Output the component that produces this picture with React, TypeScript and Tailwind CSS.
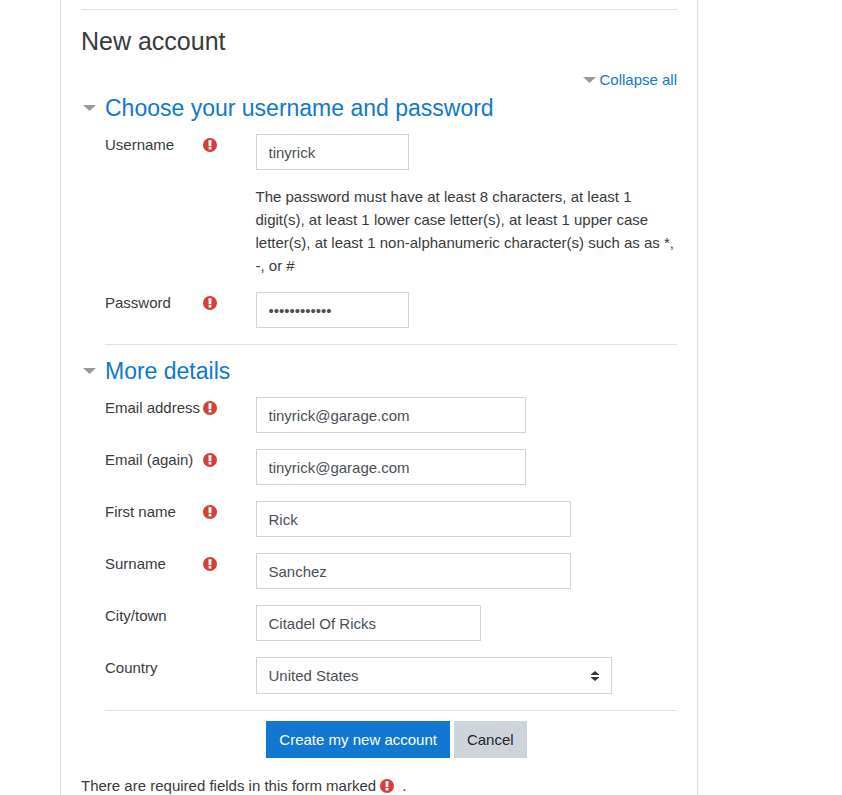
import type { ReactNode } from "react";

function RequiredIcon() {
  return (
    <svg
      viewBox="0 0 14 14"
      className="inline-block size-3.5 shrink-0"
      role="img"
      aria-label="Required"
    >
      <circle cx="7" cy="7" r="7" fill="#d43f3a" />
      <path d="M5.4 2.3h3.2l-.3 6H5.7z" fill="#fff" />
      <path d="M5.6 9h2.8v2.5H5.6z" fill="#fff" />
    </svg>
  );
}

function Caret() {
  return (
    <svg viewBox="0 0 13 6" className="h-1.5 w-[13px] shrink-0" aria-hidden="true">
      <path d="M0 0h13L6.5 6z" fill="#999" />
    </svg>
  );
}

const control =
  "block max-w-full appearance-none border border-[#ced4da] bg-white px-3 text-[15px] text-[#495057] outline-none";

type RowProps = {
  id?: string;
  label?: string;
  required?: boolean;
  children: ReactNode;
};

function Row({ id, label, required, children }: RowProps) {
  return (
    <div className="-mx-[15px] flex">
      <div className="flex w-1/4 items-start justify-between pr-6 pl-[15px] leading-[22px]">
        {label && (
          <label htmlFor={id} className="whitespace-nowrap">
            {label}
          </label>
        )}
        {required && (
          <span className="flex h-[21px] items-center">
            <RequiredIcon />
          </span>
        )}
      </div>
      <div className="w-3/4 px-[15px]">{children}</div>
    </div>
  );
}

type SectionProps = { title: string; children: ReactNode };

function Section({ title, children }: SectionProps) {
  return (
    <fieldset>
      <legend className="contents">
        <a
          href="#"
          className="flex items-center gap-[9px] pl-0.5 text-[23px] leading-7 text-[#1177d1]"
        >
          <Caret />
          {title}
        </a>
      </legend>
      <div className="mt-3 ml-6 flex flex-col gap-4 border-b border-[#dee2e6] pb-4">
        {children}
      </div>
    </fieldset>
  );
}

export default function App() {
  return (
    <main className="mr-36 ml-[60px] min-h-screen border-x border-[#dfdfdf] bg-white px-5 pt-[9px] font-['Liberation_Sans',Arial,sans-serif] text-[15px] leading-[23px] text-[#373a3c]">
      <hr className="border-[#dfdfdf]" />
      <h3 className="mt-4 text-[25px] leading-[30px]">New account</h3>
      <form onSubmit={(e) => e.preventDefault()}>
        <div className="mt-3 flex justify-end">
          <a href="#" className="flex items-center gap-[3px] text-[#1177d1]">
            <Caret />
            Collapse all
          </a>
        </div>
        <div className="mt-[3px]">
          <Section title="Choose your username and password">
            <Row id="username" label="Username" required>
              <input id="username" type="text" defaultValue="tinyrick" className={`${control} h-9 w-[153px]`} />
            </Row>
            <Row>
              <p className="-my-px">
                The password must have at least 8 characters, at least 1 digit(s), at least 1 lower
                case letter(s), at least 1 upper case letter(s), at least 1 non-alphanumeric
                character(s) such as as *, -, or #
              </p>
            </Row>
            <Row id="password" label="Password" required>
              <input id="password" type="password" defaultValue="wubbalubba12" className={`${control} h-9 w-[153px]`} />
            </Row>
          </Section>
        </div>
        <div className="mt-3">
          <Section title="More details">
            <Row id="email" label="Email address" required>
              <input id="email" type="text" defaultValue="tinyrick@garage.com" className={`${control} h-9 w-[270px]`} />
            </Row>
            <Row id="email2" label="Email (again)" required>
              <input id="email2" type="text" defaultValue="tinyrick@garage.com" className={`${control} h-9 w-[270px]`} />
            </Row>
            <Row id="firstname" label="First name" required>
              <input id="firstname" type="text" defaultValue="Rick" className={`${control} h-9 w-[315px]`} />
            </Row>
            <Row id="surname" label="Surname" required>
              <input id="surname" type="text" defaultValue="Sanchez" className={`${control} h-9 w-[315px]`} />
            </Row>
            <Row id="city" label="City/town">
              <input id="city" type="text" defaultValue="Citadel Of Ricks" className={`${control} h-9 w-[225px]`} />
            </Row>
            <Row id="country" label="Country">
              <div className="relative w-[356px] max-w-full">
                <select id="country" defaultValue="US" className={`${control} h-[37px] w-full`}>
                  <option value="US">United States</option>
                </select>
                <svg
                  viewBox="0 0 8 10"
                  className="pointer-events-none absolute top-3.5 right-[13px] h-2.5 w-2"
                  aria-hidden="true"
                >
                  <path d="M4 0l4 3.2V4H0v-.8zM4 10L0 6.8V6h8v.8z" fill="#343a40" />
                </svg>
              </div>
            </Row>
          </Section>
        </div>
        <div className="mt-2.5 flex justify-center gap-1 pl-[35px]">
          <button type="submit" className="h-[37px] bg-[#1177d1] px-[13px] text-white">
            Create my new account
          </button>
          <button type="button" className="h-[37px] bg-[#ced4da] px-[13px] text-[#212529]">
            Cancel
          </button>
        </div>
      </form>
      <p className="mt-4 flex items-center gap-1">
        There are required fields in this form marked
        <RequiredIcon />
        <span className="ml-1">.</span>
      </p>
    </main>
  );
}
